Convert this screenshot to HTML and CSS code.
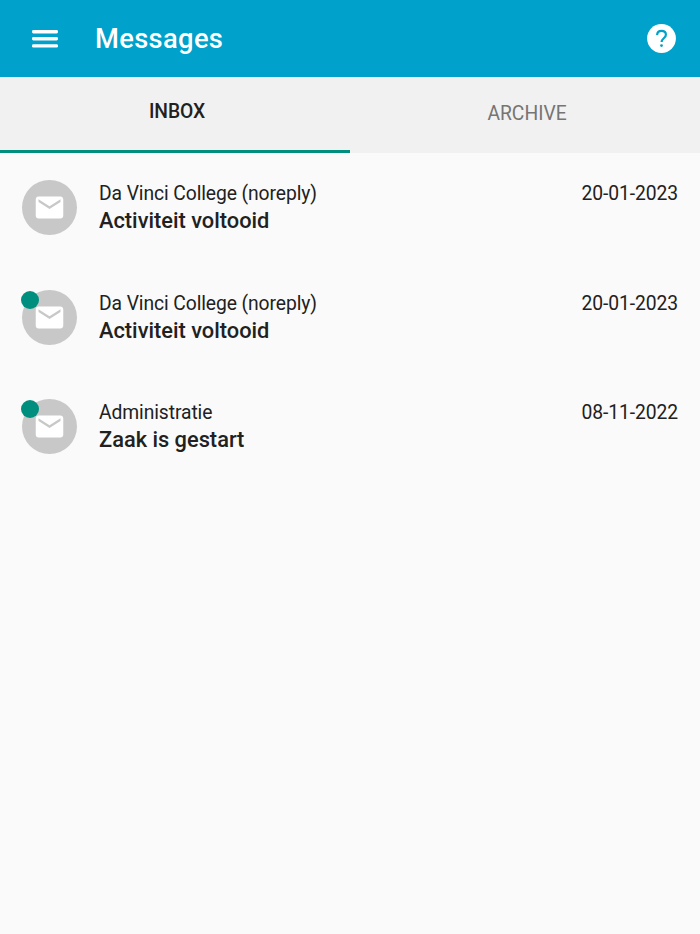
FILE: index.html
```html
<!DOCTYPE html>
<html lang="en">
<head>
    <meta charset="UTF-8">
    <meta name="viewport" content="width=device-width, initial-scale=1.0">
    <title>Messages</title>
    <link rel="stylesheet" href="styles.css">
</head>
<body>
    <header class="toolbar">
        <button class="toolbar__menu" aria-label="Menu">
            <svg viewBox="0 0 26 18">
                <rect width="26" height="3.4" rx="1.4"/>
                <rect y="7.1" width="26" height="3.4" rx="1.4"/>
                <rect y="14.2" width="26" height="3.4" rx="1.4"/>
            </svg>
        </button>
        <h1 class="toolbar__title">Messages</h1>
        <button class="toolbar__help" aria-label="Help">
            <svg viewBox="0 0 29 29" fill="none">
                <circle cx="14.5" cy="14.5" r="14.4" fill="#fff"/>
                <path d="M10.1 11.1c.1-2.7 1.9-4.2 4.4-4.2s4.4 1.4 4.4 3.8c0 3.6-4.3 3.6-4.3 7.4" stroke="#00a1ca" stroke-width="2.2"/>
                <circle cx="14.5" cy="21.6" r="1.45" fill="#00a1ca"/>
            </svg>
        </button>
    </header>

    <nav class="tabs">
        <a class="tabs__item tabs__item--active">INBOX</a>
        <a class="tabs__item">ARCHIVE</a>
    </nav>

    <main class="messages">
        <article class="message">
            <div class="message__avatar">
                <svg class="message__icon" viewBox="0 0 24 24"><path d="M20 4H4c-1.1 0-2 .9-2 2v12c0 1.1.9 2 2 2h16c1.1 0 2-.9 2-2V6c0-1.1-.9-2-2-2zm0 4l-8 5-8-5V6l8 5 8-5v2z"/></svg>
            </div>
            <div class="message__body">
                <div class="message__sender">Da Vinci College (noreply)</div>
                <div class="message__subject">Activiteit voltooid</div>
            </div>
            <time class="message__date">20-01-2023</time>
        </article>

        <article class="message">
            <div class="message__avatar">
                <span class="message__unread"></span>
                <svg class="message__icon" viewBox="0 0 24 24"><path d="M20 4H4c-1.1 0-2 .9-2 2v12c0 1.1.9 2 2 2h16c1.1 0 2-.9 2-2V6c0-1.1-.9-2-2-2zm0 4l-8 5-8-5V6l8 5 8-5v2z"/></svg>
            </div>
            <div class="message__body">
                <div class="message__sender">Da Vinci College (noreply)</div>
                <div class="message__subject">Activiteit voltooid</div>
            </div>
            <time class="message__date">20-01-2023</time>
        </article>

        <article class="message">
            <div class="message__avatar">
                <span class="message__unread"></span>
                <svg class="message__icon" viewBox="0 0 24 24"><path d="M20 4H4c-1.1 0-2 .9-2 2v12c0 1.1.9 2 2 2h16c1.1 0 2-.9 2-2V6c0-1.1-.9-2-2-2zm0 4l-8 5-8-5V6l8 5 8-5v2z"/></svg>
            </div>
            <div class="message__body">
                <div class="message__sender">Administratie</div>
                <div class="message__subject">Zaak is gestart</div>
            </div>
            <time class="message__date">08-11-2022</time>
        </article>
    </main>
</body>
</html>
```

FILE: styles.css
```css
* {
    box-sizing: border-box;
}

body {
    margin: 0;
    min-height: 100vh;
    background: #fafafa;
    color: #212121;
    font-family: Roboto, "Liberation Sans", sans-serif;
}

button {
    padding: 0;
    border: 0;
    background: none;
}

.toolbar {
    display: flex;
    align-items: center;
    height: 77px;
    padding: 0 24px 0 32px;
    background: #00a1ca;
}

.toolbar__menu {
    width: 26px;
    height: 18px;
}

.toolbar__menu svg {
    display: block;
    fill: #fff;
}

.toolbar__title {
    margin: 0 0 0 37px;
    color: #fff;
    font-size: 27.3px;
    font-weight: 500;
    line-height: 32px;
    letter-spacing: 0.35px;
}

.toolbar__help {
    width: 29px;
    height: 29px;
    margin-left: auto;
}

.toolbar__help svg {
    display: block;
}

.tabs {
    display: grid;
    grid-template-columns: 1fr 1fr;
    height: 76px;
    background: #f1f1f1;
}

.tabs__item {
    padding: 26px 0 0 4px;
    color: #757575;
    font-size: 19.3px;
    line-height: 22px;
    text-align: center;
}

.tabs__item--active {
    padding-top: 24px;
    border-bottom: 3px solid #008f7e;
    color: #212121;
    font-weight: 500;
    letter-spacing: -0.1px;
}

.message {
    display: flex;
    align-items: flex-start;
    height: 109.3px;
    padding: 27.4px 22px 0;
}

.message__avatar {
    position: relative;
    display: flex;
    align-items: center;
    justify-content: center;
    width: 55px;
    height: 55px;
    border-radius: 50%;
    background: #c8c8c8;
}

.message__icon {
    width: 33px;
    height: 33px;
    fill: #fff;
}

.message__unread {
    position: absolute;
    top: 1px;
    left: -1px;
    width: 18px;
    height: 18px;
    border-radius: 50%;
    background: #008f7e;
}

.message__body {
    flex: 1;
    margin-left: 22px;
}

.message__sender,
.message__date {
    font-size: 19.3px;
    line-height: 27px;
    letter-spacing: -0.09px;
}

.message__subject {
    font-size: 21.8px;
    font-weight: 500;
    line-height: 27.8px;
}
```
